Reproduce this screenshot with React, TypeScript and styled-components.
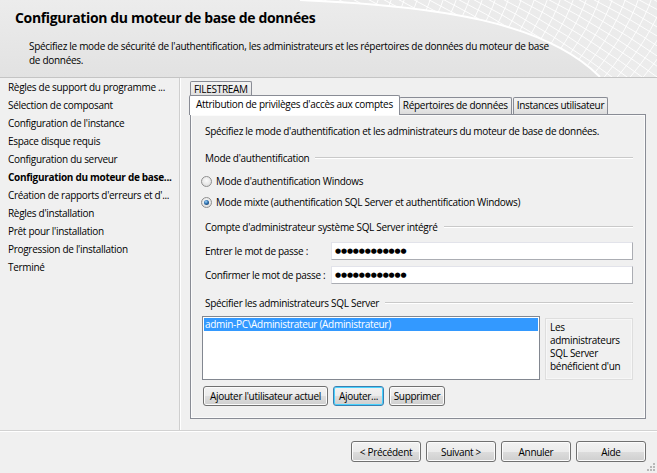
import React from "react"
import styled, { createGlobalStyle, css } from "styled-components"

const GlobalStyle = createGlobalStyle`
  html, body {
    margin: 0;
    padding: 0;
  }
  body {
    background: #f0f0f0;
    font-family: "Open Sans", "Noto Sans", sans-serif;
    font-size: 10px;
    letter-spacing: -0.3px;
    color: #000;
  }
  * {
    box-sizing: border-box;
  }
`

const Window = styled.div`
  position: relative;
  width: 657px;
  height: 473px;
  display: flex;
  flex-direction: column;
  overflow: hidden;
  background: #f0f0f0;
`

const Header = styled.header`
  position: relative;
  height: 78px;
  flex-shrink: 0;
  padding: 9px 15px 0 15px;
  background: linear-gradient(to bottom, #ececec 0%, #e2e2e2 100%);
  border-bottom: 1px solid #c4c4c4;
  overflow: hidden;
`

const HeaderArtBox = styled.svg`
  position: absolute;
  top: 0;
  right: 0;
`

const Title = styled.h1`
  position: relative;
  margin: 0;
  font-size: 14px;
  line-height: 18px;
  font-weight: 700;
  letter-spacing: -0.35px;
`

const Subtitle = styled.p`
  position: relative;
  margin: 12px 0 0 14px;
  line-height: 14px;
  font-size: 10px;
`

const Main = styled.div`
  display: flex;
  height: 352px;
  flex-shrink: 0;
`

const Nav = styled.nav`
  width: 180px;
  flex-shrink: 0;
  border-right: 1px solid #cfcfcf;
  box-shadow: 1px 0 0 #ffffff;
`

const NavItem = styled.div<{ $current?: boolean }>`
  padding-left: 8px;
  line-height: 18px;
  white-space: nowrap;
  font-weight: ${({ $current }) => ($current ? 700 : 400)};
`

const Content = styled.section`
  flex: 1;
  padding: 3px 11px 0 9px;
`

const TabRow = styled.div<{ $back?: boolean }>`
  display: flex;
  align-items: flex-end;
  height: ${({ $back }) => ($back ? "16px" : "17px")};
  padding-left: ${({ $back }) => ($back ? "1px" : "2px")};
`

const Tab = styled.div<{ $active?: boolean }>`
  height: 17px;
  padding: 0 3px;
  line-height: 15px;
  white-space: nowrap;
  border: 1px solid #898c95;
  border-bottom: none;
  border-radius: 2px 2px 0 0;
  background: linear-gradient(to bottom, #f3f3f3 0%, #ebebeb 50%, #dcdcdc 100%);
  margin-right: 1px;
  ${({ $active }) =>
    $active &&
    css`
      position: relative;
      z-index: 2;
      height: 20px;
      line-height: 17px;
      margin: 0 -1px -1px -2px;
      padding: 0 6px;
      background: #ffffff;
    `}
`

const BackTab = styled(Tab)`
  height: 16px;
  line-height: 14px;
`

const Panel = styled.div`
  position: relative;
  height: 305px;
  margin-left: 1px;
  padding: 9px 12px 0 12px;
  border: 1px solid #898c95;
  box-shadow: inset 0 0 0 1px #fbfbfb;
  background: #f0f0f0;
`

const Text = styled.div<{ $top?: number }>`
  margin: ${({ $top }) => $top ?? 0}px 0 0 2px;
  line-height: 14px;
  white-space: nowrap;
`

const GroupTitle = styled.div<{ $top: number }>`
  display: flex;
  align-items: center;
  gap: 6px;
  margin: ${({ $top }) => $top}px 0 0 2px;
  line-height: 14px;
  white-space: nowrap;
  &::after {
    content: "";
    flex: 1;
    border-top: 1px solid #c9c9c9;
    border-bottom: 1px solid #ffffff;
  }
`

const RadioRow = styled.label<{ $top: number }>`
  display: flex;
  align-items: center;
  gap: 4px;
  margin: ${({ $top }) => $top}px 0 0 -2px;
  line-height: 14px;
  white-space: nowrap;
`

const RadioDot = styled.span<{ $checked?: boolean }>`
  position: relative;
  width: 11px;
  height: 11px;
  border-radius: 50%;
  border: 1px solid #8f8f8f;
  background: radial-gradient(circle at 50% 40%, #fbfbfb 0%, #e6e6e6 60%, #cfcfcf 100%);
  flex-shrink: 0;
  ${({ $checked }) =>
    $checked &&
    css`
      &::after {
        content: "";
        position: absolute;
        left: 2px;
        top: 2px;
        width: 5px;
        height: 5px;
        border-radius: 50%;
        background: radial-gradient(circle at 40% 35%, #9fd4f8 0%, #2c6fb0 45%, #1b2f48 100%);
      }
    `}
`

const FieldRow = styled.div<{ $top: number }>`
  display: flex;
  align-items: center;
  margin-top: ${({ $top }) => $top}px;
  height: 18px;
`

const FieldLabel = styled.span`
  width: 128px;
  padding-left: 2px;
  white-space: nowrap;
`

const Field = styled.div`
  flex: 1;
  height: 18px;
  padding-left: 3px;
  background: #ffffff;
  border: 1px solid #abadb3;
  border-top-color: #e2e3ea;
  border-left-color: #e2e3ea;
  font-family: "DejaVu Sans", sans-serif;
  font-size: 7px;
  line-height: 16px;
  letter-spacing: -0.15px;
`

const AdminRow = styled.div`
  display: flex;
  align-items: flex-start;
  gap: 5px;
  margin-top: 6px;
  margin-left: -1px;
`

const ListBox = styled.div`
  width: 338px;
  height: 64px;
  padding: 1px;
  background: #ffffff;
  border: 1px solid #828790;
`

const ListItem = styled.div<{ $selected?: boolean }>`
  line-height: 13px;
  padding-left: 1px;
  white-space: nowrap;
  color: ${({ $selected }) => ($selected ? "#ffffff" : "#000")};
  background: ${({ $selected }) => ($selected ? "#3399ff" : "transparent")};
`

const InfoBox = styled.div`
  flex: 1;
  height: 62px;
  margin-top: 2px;
  padding: 2px 4px;
  overflow: hidden;
  border: 1px solid #dedede;
  box-shadow: inset 0 0 0 1px #f7f7f7;
  line-height: 13px;
  span {
    display: block;
    white-space: nowrap;
  }
`

const ButtonRow = styled.div`
  display: flex;
  gap: 5px;
  margin-top: 6px;
`

const Button = styled.button<{ $width: number; $focused?: boolean; $tall?: boolean }>`
  width: ${({ $width }) => $width}px;
  height: ${({ $tall }) => ($tall ? "21px" : "20px")};
  padding: 0;
  font: inherit;
  letter-spacing: inherit;
  color: #000;
  border: 1px solid #707070;
  border-radius: 3px;
  background: linear-gradient(to bottom, #f2f2f2 0%, #ebebeb 50%, #dddddd 51%, #cfcfcf 100%);
  box-shadow: inset 0 0 0 1px #fbfbfb;
  white-space: nowrap;
  ${({ $focused }) =>
    $focused &&
    css`
      border-color: #3c7fb1;
      box-shadow: inset 0 0 0 1px #48d2fe;
    `}
`

const Footer = styled.footer`
  position: relative;
  flex: 1;
  display: flex;
  justify-content: flex-end;
  gap: 5px;
  padding: 10px 11px 0 0;
  border-top: 1px solid #d2d2d2;
  box-shadow: inset 0 1px 0 #ffffff;
`

const Grip = styled.svg`
  position: absolute;
  right: 1px;
  bottom: 1px;
`

const HeaderArt = () => {
  const a: string[] = []
  const b: string[] = []
  for (let i = 0; i < 26; i++) {
    const x = 300 + i * 15
    a.push(`M${x} -5 Q ${x + 70} 30 ${x + 150} 90`)
  }
  for (let i = 0; i < 26; i++) {
    const x = 380 + i * 13
    b.push(`M${x} -5 Q ${x - 15} 40 ${x - 60} 90`)
  }
  return (
    <HeaderArtBox width="657" height="77" viewBox="0 0 657 77">
      <defs>
        <clipPath id="wave">
          <path d="M300 0 C 440 6, 545 22, 600 77 L657 77 L657 0 Z" />
        </clipPath>
        <linearGradient id="waveFill" x1="0" y1="0" x2="1" y2="1">
          <stop offset="0" stopColor="#eaeaea" />
          <stop offset="1" stopColor="#ececec" />
        </linearGradient>
      </defs>
      <path d="M300 0 C 440 6, 545 22, 600 77 L657 77 L657 0 Z" fill="url(#waveFill)" />
      <g clipPath="url(#wave)" fill="none" stroke="#ffffff" strokeWidth="0.9">
        {a.map((d, i) => (
          <path key={"a" + i} d={d} />
        ))}
        {b.map((d, i) => (
          <path key={"b" + i} d={d} />
        ))}
      </g>
      <path d="M300 0 C 440 6, 545 22, 600 77" fill="none" stroke="#ffffff" strokeWidth="2" />
    </HeaderArtBox>
  )
}

const steps = [
  "Règles de support du programme ...",
  "Sélection de composant",
  "Configuration de l'instance",
  "Espace disque requis",
  "Configuration du serveur",
  "Configuration du moteur de base...",
  "Création de rapports d'erreurs et d'...",
  "Règles d'installation",
  "Prêt pour l'installation",
  "Progression de l'installation",
  "Terminé",
]

export default function App() {
  return (
    <Window>
      <GlobalStyle />
      <Header>
        <HeaderArt />
        <Title>Configuration du moteur de base de données</Title>
        <Subtitle>
          Spécifiez le mode de sécurité de l'authentification, les administrateurs et les répertoires de données du moteur de base
          <br />
          de données.
        </Subtitle>
      </Header>
      <Main>
        <Nav>
          {steps.map((s, i) => (
            <NavItem key={s} $current={i === 5}>
              {s}
            </NavItem>
          ))}
        </Nav>
        <Content>
          <TabRow $back>
            <BackTab>FILESTREAM</BackTab>
          </TabRow>
          <TabRow>
            <Tab $active>Attribution de privilèges d'accès aux comptes</Tab>
            <Tab>Répertoires de données</Tab>
            <Tab>Instances utilisateur</Tab>
          </TabRow>
          <Panel>
            <Text>Spécifiez le mode d'authentification et les administrateurs du moteur de base de données.</Text>
            <GroupTitle $top={13}>Mode d'authentification</GroupTitle>
            <RadioRow $top={9}>
              <RadioDot />
              Mode d'authentification Windows
            </RadioRow>
            <RadioRow $top={7}>
              <RadioDot $checked />
              Mode mixte (authentification SQL Server et authentification Windows)
            </RadioRow>
            <GroupTitle $top={11}>Compte d'administrateur système SQL Server intégré</GroupTitle>
            <FieldRow $top={8}>
              <FieldLabel>Entrer le mot de passe :</FieldLabel>
              <Field>●●●●●●●●●●●●</Field>
            </FieldRow>
            <FieldRow $top={6}>
              <FieldLabel>Confirmer le mot de passe :</FieldLabel>
              <Field>●●●●●●●●●●●●</Field>
            </FieldRow>
            <GroupTitle $top={12}>Spécifier les administrateurs SQL Server</GroupTitle>
            <AdminRow>
              <ListBox>
                <ListItem $selected>admin-PC\Administrateur (Administrateur)</ListItem>
              </ListBox>
              <InfoBox>
                <span>Les</span>
                <span>administrateurs</span>
                <span>SQL Server</span>
                <span>bénéficient d'un</span>
              </InfoBox>
            </AdminRow>
            <ButtonRow>
              <Button $width={125}>Ajouter l'utilisateur actuel</Button>
              <Button $width={51} $focused>
                Ajouter...
              </Button>
              <Button $width={56}>Supprimer</Button>
            </ButtonRow>
          </Panel>
        </Content>
      </Main>
      <Footer>
        <Button $width={70} $tall>
          &lt; Précédent
        </Button>
        <Button $width={70} $tall>
          Suivant &gt;
        </Button>
        <Button $width={70} $tall>
          Annuler
        </Button>
        <Button $width={70} $tall>
          Aide
        </Button>
        <Grip width="10" height="10" viewBox="0 0 10 10">
          <g fill="#b8b8b8">
            <rect x="7" y="7" width="2" height="2" />
            <rect x="4" y="7" width="2" height="2" />
            <rect x="7" y="4" width="2" height="2" />
            <rect x="1" y="7" width="2" height="2" />
            <rect x="4" y="4" width="2" height="2" />
            <rect x="7" y="1" width="2" height="2" />
          </g>
        </Grip>
      </Footer>
    </Window>
  )
}
